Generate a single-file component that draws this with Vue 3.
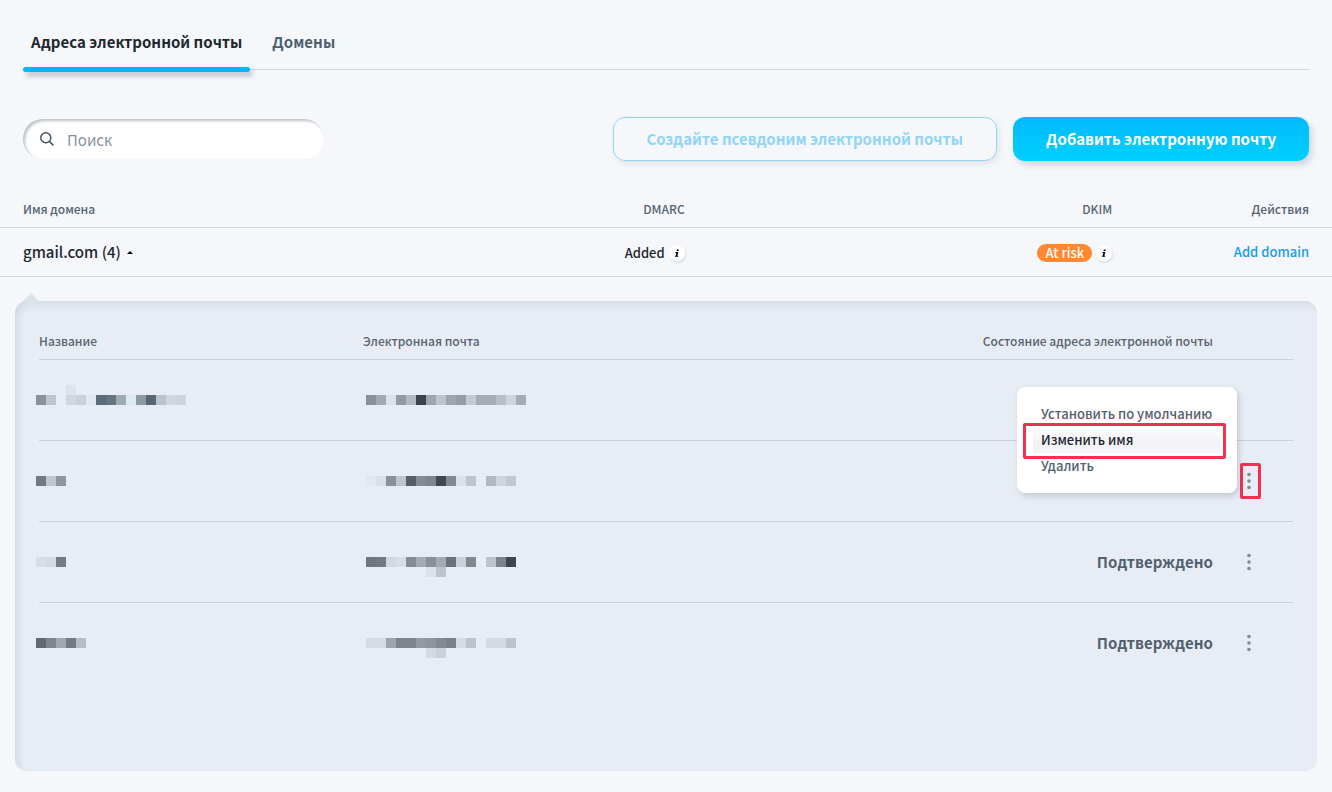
<script setup>
import { ref } from 'vue'

const search = ref('')
const openRow = ref(1)

const menuItems = [
  { label: 'Установить по умолчанию', active: false },
  { label: 'Изменить имя', active: true },
  { label: 'Удалить', active: false },
]

// Each redacted value is a list of [column, row, colour] cells on a 10px grid.
const line = (colours, extra = []) => [
  ...colours.map((c, i) => [i, 1, c]).filter((c) => c[2]),
  ...extra,
]

const rows = [
  {
    name: line(
      ['#8c9098', '#c0c5cd', '', '#d2d7df', '#cbd0d8', '#e0e8f0', '#5a6b7c', '#677583', '#9fabb5', '#e0e8f0', '#8d9aa5', '#556775', '#b8c3ca', '#d2d7df', '#cfd4dc'],
      [[3, 0, '#dfe4ec']],
    ),
    email: line(['#8b8f98', '#a4a8b1', '#dde2ea', '#9599a2', '#b4b8c1', '#3d424b', '#a0a4ad', '#bfc4cc', '#a0a4ad', '#989ca5', '#c3c9d1', '#a7abb4', '#a7abb4', '#b8bdc6', '#cdd4dc', '#a6aab3']),
    status: '',
  },
  {
    name: line(['#747881', '#c2c7cf', '#9195a0']),
    email: line(['#e2e8ef', '#dbe0e8', '#8b8f98', '#c0c5cd', '#575c65', '#868b93', '#7f858d', '#40474f', '#858991', '#dce1e9', '#c0c5cd', '', '#b2b7c0', '#ced5dd', '#c2c7cf']),
    status: '',
  },
  {
    name: line(['#d9dee6', '#d5dae2', '#757b84']),
    email: line(
      ['#70757e', '#757981', '#d2d8e0', '#d7dde5', '#868b94', '#a4a9b2', '#8a9099', '#a4aab3', '#6c717a', '#cbd1d9', '#83888f', '', '#bdc3cb', '#7d828b', '#3e454e'],
      [[6, 2, '#dbe1e8'], [7, 2, '#bfc4cc']],
    ),
    status: 'Подтверждено',
  },
  {
    name: line(['#636872', '#80858e', '#a2a6af', '#757983', '#b7bcc5']),
    email: line(
      ['#d5dbe2', '#d5dbe2', '#a0a4ad', '#7f838b', '#7f838b', '#9499a2', '#8f949d', '#858991', '#7c8088', '#d6dce4', '#bec3cb', '', '#d4dae2', '#d4dae2', '#bfc4cc'],
      [[6, 2, '#d4dae1'], [7, 2, '#cbd1d9']],
    ),
    status: 'Подтверждено',
  },
]
</script>

<template>
  <main class="page">
    <nav class="tabs" aria-label="Разделы">
      <a class="tab active" href="#addresses" aria-current="page">Адреса электронной почты</a>
      <a class="tab" href="#domains">Домены</a>
    </nav>

    <div class="toolbar">
      <label class="search">
        <svg class="search-icon" viewBox="0 0 16 16" aria-hidden="true">
          <circle cx="6.8" cy="6.8" r="5" />
          <path d="M10.6 10.6 14.4 14.4" />
        </svg>
        <input v-model="search" type="search" placeholder="Поиск" aria-label="Поиск" />
      </label>
      <div class="actions">
        <button class="btn outline" type="button" disabled>Создайте псевдоним электронной почты</button>
        <button class="btn primary" type="button">Добавить электронную почту</button>
      </div>
    </div>

    <table class="domains">
      <colgroup>
        <col class="c-domain" /><col class="c-dmarc" /><col class="c-dkim" /><col />
      </colgroup>
      <thead>
        <tr>
          <th scope="col">Имя домена</th>
          <th scope="col">DMARC</th>
          <th scope="col">DKIM</th>
          <th scope="col">Действия</th>
        </tr>
      </thead>
      <tbody>
        <tr>
          <td>
            <button class="expander" type="button" aria-expanded="true">
              <span><b>gmail.com</b> (4)</span>
              <svg class="caret" viewBox="0 0 6 3" aria-hidden="true"><path d="M0 3 3 0 6 3Z" /></svg>
            </button>
          </td>
          <td>
            <span class="state">
              Added
              <button class="info" type="button" aria-label="DMARC">
                <svg viewBox="0 0 16 16" aria-hidden="true"><path d="M7.9 4.4h1.9l-.4 1.7H7.5ZM6.5 7h2.8L8.4 10.7h.9l-.2 1H5.9l.2-1h.6L7.3 8H6.3Z" /></svg>
              </button>
            </span>
          </td>
          <td>
            <span class="state">
              <span class="badge">At risk</span>
              <button class="info" type="button" aria-label="DKIM">
                <svg viewBox="0 0 16 16" aria-hidden="true"><path d="M7.9 4.4h1.9l-.4 1.7H7.5ZM6.5 7h2.8L8.4 10.7h.9l-.2 1H5.9l.2-1h.6L7.3 8H6.3Z" /></svg>
              </button>
            </span>
          </td>
          <td><a class="link" href="#add-domain">Add domain</a></td>
        </tr>
      </tbody>
    </table>

    <section class="panel">
      <table class="emails">
        <colgroup>
          <col class="c-name" /><col class="c-email" /><col /><col class="c-more" />
        </colgroup>
        <thead>
          <tr>
            <th scope="col">Название</th>
            <th scope="col">Электронная почта</th>
            <th scope="col" class="right">Состояние адреса электронной почты</th>
            <td></td>
          </tr>
        </thead>
        <tbody>
          <tr v-for="(row, i) in rows" :key="i">
            <td>
              <svg class="mosaic name" viewBox="0 0 150 30" shape-rendering="crispEdges">
                <rect v-for="([x, y, c], k) in row.name" :key="k" :x="x * 10" :y="y * 10" width="10" height="10" :fill="c" />
              </svg>
            </td>
            <td>
              <svg class="mosaic email" viewBox="0 0 160 30" shape-rendering="crispEdges">
                <rect v-for="([x, y, c], k) in row.email" :key="k" :x="x * 10" :y="y * 10" width="10" height="10" :fill="c" />
              </svg>
            </td>
            <td class="status">{{ row.status }}</td>
            <td>
              <div v-if="i > 0" class="more-wrap">
                <button class="more" :class="{ marked: openRow === i }" type="button" aria-label="Действия">
                  <svg viewBox="0 0 4 18" aria-hidden="true">
                    <circle cx="2" cy="2.5" r="1.8" /><circle cx="2" cy="9" r="1.8" /><circle cx="2" cy="15.5" r="1.8" />
                  </svg>
                </button>
                <ul v-if="openRow === i" class="menu">
                  <li v-for="item in menuItems" :key="item.label">
                    <button class="item" :class="{ current: item.active }" type="button">{{ item.label }}</button>
                  </li>
                </ul>
              </div>
            </td>
          </tr>
        </tbody>
      </table>
    </section>
  </main>
</template>

<style>
body {
  background: #f5f7fb;
}
</style>

<style scoped>
.page {
  box-sizing: border-box;
  min-height: 100vh;
  padding: 20px 0 21px;
  color: #1f272e;
  font-family: "Noto Sans CJK SC", "Noto Sans", sans-serif;
  font-size: 13px;
  line-height: 20px;
}

button,
input {
  font: inherit;
  color: inherit;
}

button {
  padding: 0;
  border: 0;
  background: none;
}

svg {
  display: block;
}

table {
  width: 100%;
  border-collapse: separate;
  border-spacing: 0;
  table-layout: fixed;
}

th,
td {
  padding: 0;
  text-align: left;
}

th {
  color: #566370;
  font-size: 12px;
  font-weight: 500;
}

.tabs {
  display: flex;
  gap: 14px;
  margin: 0 23px;
  border-bottom: 1px solid #cfd5db;
}

.tab {
  position: relative;
  padding: 12px 8px 17px;
  color: #4f5f6f;
  font-size: 15px;
  font-weight: 700;
  text-decoration: none;
}

.tab.active {
  color: #1f272e;
}

.tab.active::after {
  content: "";
  position: absolute;
  right: 0;
  bottom: -3px;
  left: 0;
  height: 5px;
  border-radius: 3px;
  background: #06b4fb;
  box-shadow: 3px 4px 5px rgba(70, 85, 95, 0.35);
}

.toolbar {
  display: flex;
  align-items: center;
  justify-content: space-between;
  gap: 16px;
  margin: 47px 23px 0;
}

.search {
  display: flex;
  align-items: center;
  gap: 12px;
  box-sizing: border-box;
  width: 301px;
  height: 40px;
  padding: 0 16px;
  border-radius: 20px;
  background: #fff;
  box-shadow: inset 2px 2px 3px rgba(85, 100, 110, 0.4);
}

.search-icon {
  flex: none;
  width: 16px;
  height: 16px;
  fill: none;
  stroke: #46535f;
  stroke-width: 1.5;
}

.search input {
  min-width: 0;
  flex: 1;
  padding: 2px 0 0;
  border: 0;
  outline: 0;
  background: none;
  font-size: 15px;
}

.search input::placeholder {
  color: #84939d;
  opacity: 1;
}

.actions {
  display: flex;
  gap: 16px;
}

.btn {
  box-sizing: border-box;
  height: 44px;
  padding: 0 33px;
  border-radius: 12px;
  font-size: 15px;
  font-weight: 700;
}

.outline {
  border: 1px solid #94d4f0;
  color: #91d5f5;
  box-shadow: 2px 3px 6px rgba(80, 100, 120, 0.12);
}

.primary {
  color: #fff;
  background: linear-gradient(#03bafc, #00d0ff);
  box-shadow: 3px 4px 6px rgba(80, 110, 140, 0.25);
}

.domains {
  margin-top: 38px;
}

.domains th {
  padding-bottom: 8px;
}

.domains th,
.domains td {
  border-bottom: 1px solid #cfd5db;
}

.domains td {
  height: 48px;
  font-weight: 500;
}

.domains th + th,
.domains td + td {
  text-align: right;
}

.domains tr > :first-child {
  padding-left: 23px;
}

.domains tr > :last-child {
  padding-right: 23px;
}

.c-domain {
  width: 30%;
}

.c-dmarc {
  width: 21.4%;
}

.c-dkim {
  width: 32.1%;
}

.expander {
  display: flex;
  align-items: center;
  gap: 6px;
  font-size: 15px;
}

.expander b {
  font-weight: 500;
}

.caret {
  width: 6px;
  height: 3px;
}

.state {
  display: inline-flex;
  align-items: center;
  gap: 4px;
  vertical-align: middle;
}

.badge {
  padding: 0 8px;
  border-radius: 9px;
  color: #fff;
  background: #ff8933;
  line-height: 18px;
}

.info {
  width: 16px;
  height: 16px;
  border-radius: 8px;
  background: #fff;
  box-shadow: 1px 2px 3px rgba(80, 95, 110, 0.15);
}

.link {
  color: #139fe6;
  text-decoration: none;
}

.panel {
  position: relative;
  box-sizing: border-box;
  min-height: 470px;
  margin: 24px 15px 0;
  padding: 30px 24px 24px;
  border-radius: 12px;
  background: #e8edf5;
  box-shadow: inset 4px 4px 7px rgba(130, 155, 160, 0.2);
}

.panel::before {
  content: "";
  position: absolute;
  top: -8px;
  left: 7px;
  border-right: 9px solid transparent;
  border-bottom: 9px solid #dbe3e9;
  border-left: 9px solid transparent;
}

.emails th {
  padding-bottom: 8px;
}

.emails thead th,
.emails thead td,
.emails tbody tr:not(:last-child) td {
  border-bottom: 1px solid #cad1da;
}

.emails tbody td {
  height: 80px;
}

.emails .right {
  text-align: right;
}

.c-name {
  width: 324px;
}

.c-email {
  width: 324px;
}

.c-more {
  width: 80px;
}

.mosaic {
  height: 30px;
}

.mosaic.name {
  width: 150px;
  margin-left: -3px;
}

.mosaic.email {
  width: 160px;
  margin-left: 3px;
}

.emails .status {
  color: #52616e;
  font-size: 15px;
  font-weight: 700;
  text-align: right;
}

.more-wrap {
  position: relative;
  width: 21px;
  margin-left: 27px;
}

.more {
  display: flex;
  align-items: center;
  justify-content: center;
  box-sizing: border-box;
  width: 21px;
  height: 36px;
  padding-right: 4px;
  fill: #7b8b97;
}

.more svg {
  flex: none;
  width: 4px;
  height: 18px;
}

.more.marked {
  border: 3px solid #f2304f;
  border-radius: 2px;
}

.menu {
  position: absolute;
  right: 24px;
  bottom: 6px;
  box-sizing: border-box;
  width: 220px;
  margin: 0;
  padding: 14px 16px;
  border-radius: 8px;
  background: #fff;
  box-shadow: 2px 3px 6px rgba(70, 90, 110, 0.25);
  list-style: none;
}

.item {
  display: block;
  position: relative;
  width: 100%;
  padding: 3px 8px;
  color: #52616e;
  font-weight: 500;
  text-align: left;
  white-space: nowrap;
}

.item.current {
  color: #1f272e;
  background: linear-gradient(#fff, #f4f4f8 50%);
}

.item.current::after {
  content: "";
  position: absolute;
  inset: -4px -5px -6px -10px;
  border: 3px solid #f2304f;
  border-radius: 2px;
}
</style>
